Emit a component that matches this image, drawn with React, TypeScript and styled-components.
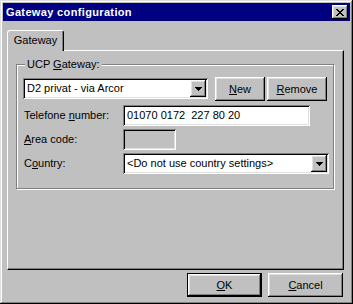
import React from "react";
import styled, { createGlobalStyle, css } from "styled-components";

const GlobalStyle = createGlobalStyle`
  html, body {
    margin: 0;
    padding: 0;
    background: #c0c0c0;
  }
  body {
    font-family: "Liberation Sans", Arial, sans-serif;
    font-size: 11px;
    color: #000;
  }
`;

const raised = css`
  box-shadow: inset -1px -1px #000, inset 1px 1px #fff, inset -2px -2px #808080,
    inset 2px 2px #dfdfdf;
`;

const sunken = css`
  box-shadow: inset 1px 1px #808080, inset -1px -1px #fff, inset 2px 2px #000,
    inset -2px -2px #dfdfdf;
`;

const Window = styled.div`
  width: 353px;
  height: 304px;
  box-sizing: border-box;
  padding: 3px;
  background: #c0c0c0;
  display: flex;
  flex-direction: column;
  box-shadow: inset -1px -1px #000, inset 1px 1px #dfdfdf, inset -2px -2px #808080,
    inset 2px 2px #fff;
`;

const TitleBar = styled.div`
  height: 18px;
  background: #000080;
  display: flex;
  align-items: center;
  justify-content: space-between;
  padding: 0 2px 0 3px;
  flex-shrink: 0;
`;

const TitleText = styled.span`
  color: #fff;
  font-weight: bold;
  font-size: 11px;
  letter-spacing: 0.35px;
`;

const CloseButton = styled.div`
  width: 16px;
  height: 14px;
  background: #c0c0c0;
  display: flex;
  align-items: center;
  justify-content: center;
  ${raised};
  svg {
    display: block;
    margin-left: -1px;
  }
`;

const Body = styled.div`
  flex: 1;
  display: flex;
  flex-direction: column;
  padding: 9px 6px 0 4px;
`;

const TabStrip = styled.div`
  display: flex;
  height: 20px;
  position: relative;
  z-index: 1;
`;

const Tab = styled.div<{ $width: number }>`
  width: ${(p) => p.$width}px;
  height: 21px;
  box-sizing: border-box;
  background: #c0c0c0;
  border-top: 1px solid #fff;
  border-left: 1px solid #fff;
  border-right: 1px solid #000;
  border-radius: 3px 3px 0 0;
  box-shadow: inset -1px 0 #808080;
  display: flex;
  align-items: center;
  justify-content: center;
  padding-bottom: 2px;
`;

const TabPanel = styled.div`
  height: 220px;
  box-sizing: border-box;
  border-top: 1px solid #fff;
  border-left: 1px solid #fff;
  border-right: 1px solid #000;
  border-bottom: 1px solid #000;
  box-shadow: inset -1px -1px #808080;
  padding: 13px 9px 0 8px;
`;

const GroupBox = styled.div`
  position: relative;
  height: 125px;
  box-sizing: border-box;
  border: 1px solid #808080;
  box-shadow: 1px 1px 0 #fff, inset 1px 1px 0 #fff;
  padding: 12px 6px 0 6px;
  display: flex;
  flex-direction: column;
  gap: 3px;
`;

const GroupCaption = styled.span`
  position: absolute;
  top: -7px;
  left: 8px;
  padding: 0 2px;
  background: #c0c0c0;
  line-height: 13px;
`;

const FieldRow = styled.div<{ $height?: number }>`
  display: flex;
  align-items: flex-start;
  height: ${(p) => p.$height ?? 21}px;
`;

const FieldLabel = styled.label`
  width: 99px;
  padding-left: 1px;
  line-height: 21px;
  flex-shrink: 0;
  white-space: nowrap;
`;

const TextField = styled.div<{ $width: number; $disabled?: boolean }>`
  width: ${(p) => p.$width}px;
  height: 21px;
  box-sizing: border-box;
  background: ${(p) => (p.$disabled ? "#c0c0c0" : "#fff")};
  ${sunken};
  padding: 0 4px;
  line-height: 21px;
  white-space: pre;
  overflow: hidden;
`;

const ComboBox = styled.div<{ $width: number; $offset?: number }>`
  width: ${(p) => p.$width}px;
  height: 21px;
  margin-top: ${(p) => p.$offset ?? 0}px;
  box-sizing: border-box;
  background: #fff;
  ${sunken};
  padding: 2px;
  display: flex;
  align-items: stretch;
  flex-shrink: 0;
`;

const ComboText = styled.span`
  flex: 1;
  padding-left: 2px;
  line-height: 17px;
  white-space: nowrap;
  overflow: hidden;
`;

const DropButton = styled.div`
  width: 16px;
  background: #c0c0c0;
  ${raised};
  display: flex;
  align-items: center;
  justify-content: center;
`;

const PushButton = styled.div<{ $width: number; $isDefault?: boolean; $gap?: number }>`
  width: ${(p) => p.$width}px;
  height: 24px;
  margin-left: ${(p) => p.$gap ?? 0}px;
  box-sizing: border-box;
  background: #c0c0c0;
  display: flex;
  align-items: center;
  justify-content: center;
  flex-shrink: 0;
  ${(p) =>
    p.$isDefault
      ? css`
          border: 1px solid #000;
          ${raised};
        `
      : raised};
`;

const Footer = styled.div`
  display: flex;
  justify-content: flex-end;
  gap: 6px;
  margin-top: 3px;
  padding-right: 1px;
`;

const DownArrow = () => (
  <svg width="7" height="4" viewBox="0 0 7 4" shapeRendering="crispEdges">
    <path d="M0 0h7v1H0zM1 1h5v1H1zM2 2h3v1H2zM3 3h1v1H3z" fill="#000" />
  </svg>
);

const CloseGlyph = () => (
  <svg width="8" height="7" viewBox="0 0 8 7" shapeRendering="crispEdges">
    <path
      d="M0 0h2v1H0zM6 0h2v1H6zM1 1h2v1H1zM5 1h2v1H5zM2 2h4v1H2zM3 3h2v1H3zM2 4h4v1H2zM1 5h2v1H1zM5 5h2v1H5zM0 6h2v1H0zM6 6h2v1H6z"
      fill="#000"
    />
  </svg>
);

const App: React.FC = () => {
  return (
    <>
      <GlobalStyle />
      <Window>
        <TitleBar>
          <TitleText>Gateway configuration</TitleText>
          <CloseButton>
            <CloseGlyph />
          </CloseButton>
        </TitleBar>
        <Body>
          <TabStrip>
            <Tab $width={57}>Gateway</Tab>
          </TabStrip>
          <TabPanel>
            <GroupBox>
              <GroupCaption>
                UCP <u>G</u>ateway:
              </GroupCaption>
              <FieldRow $height={25}>
                <ComboBox $width={185} $offset={1}>
                  <ComboText>D2 privat - via Arcor</ComboText>
                  <DropButton>
                    <DownArrow />
                  </DropButton>
                </ComboBox>
                <PushButton $width={50} $gap={7}>
                  <span>
                    <u>N</u>ew
                  </span>
                </PushButton>
                <PushButton $width={60} $gap={2}>
                  <span>
                    <u>R</u>emove
                  </span>
                </PushButton>
              </FieldRow>
              <FieldRow>
                <FieldLabel>
                  Telefone <u>n</u>umber:
                </FieldLabel>
                <TextField $width={187}>01070 0172  227 80 20</TextField>
              </FieldRow>
              <FieldRow>
                <FieldLabel>
                  <u>A</u>rea code:
                </FieldLabel>
                <TextField $width={53} $disabled />
              </FieldRow>
              <FieldRow>
                <FieldLabel>
                  C<u>o</u>untry:
                </FieldLabel>
                <ComboBox $width={206}>
                  <ComboText>&lt;Do not use country settings&gt;</ComboText>
                  <DropButton>
                    <DownArrow />
                  </DropButton>
                </ComboBox>
              </FieldRow>
            </GroupBox>
          </TabPanel>
          <Footer>
            <PushButton $width={75} $isDefault>
              <span>
                <u>O</u>K
              </span>
            </PushButton>
            <PushButton $width={75}>
              <span>
                <u>C</u>ancel
              </span>
            </PushButton>
          </Footer>
        </Body>
      </Window>
    </>
  );
};

export default App;
